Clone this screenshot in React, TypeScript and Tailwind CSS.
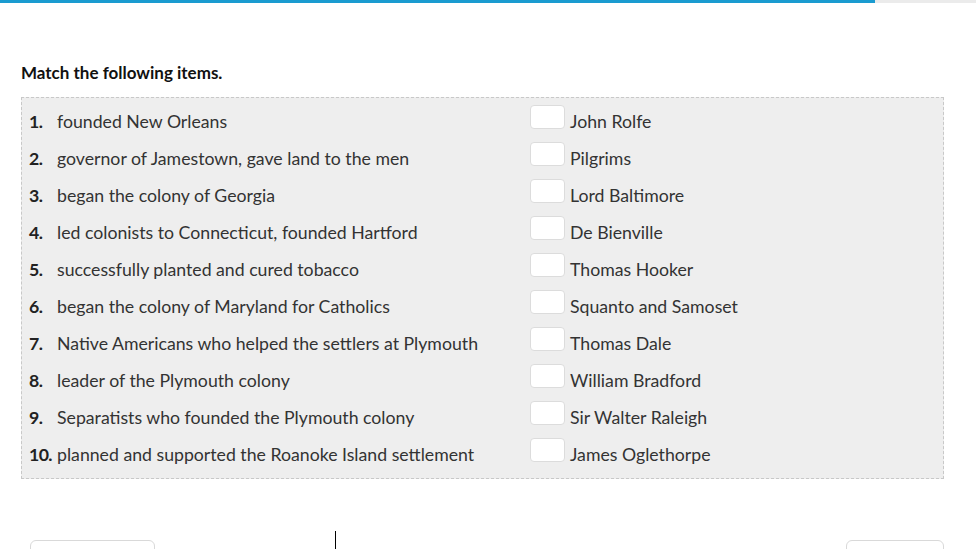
import React from "react";

const left = [
  "founded New Orleans",
  "governor of Jamestown, gave land to the men",
  "began the colony of Georgia",
  "led colonists to Connecticut, founded Hartford",
  "successfully planted and cured tobacco",
  "began the colony of Maryland for Catholics",
  "Native Americans who helped the settlers at Plymouth",
  "leader of the Plymouth colony",
  "Separatists who founded the Plymouth colony",
  "planned and supported the Roanoke Island settlement",
];

const right = [
  "John Rolfe",
  "Pilgrims",
  "Lord Baltimore",
  "De Bienville",
  "Thomas Hooker",
  "Squanto and Samoset",
  "Thomas Dale",
  "William Bradford",
  "Sir Walter Raleigh",
  "James Oglethorpe",
];

export default function App() {
  return (
    <div
      className="relative w-[976px] h-[549px] overflow-hidden bg-white text-[#333]"
      style={{ fontFamily: "Lato, 'Open Sans', sans-serif" }}
    >
      <div className="flex h-[3px] w-full">
        <div className="w-[875px] bg-[#1a9bd0]" />
        <div className="flex-1 bg-[#ebebeb]" />
      </div>
      <div className="pl-[21px] pr-[32px] pt-[60px]">
        <div className="text-[17px] font-bold text-[#111] leading-[20px]">Match the following items.</div>
        <div className="mt-[14px] h-[382px] border border-dashed border-[#c8c8c8] bg-[#eeeeee] pl-[7px] pt-[6px]">
          {left.map((t, i) => (
            <div key={i} className="flex h-[37px] items-center text-[17.7px]">
              <div className="flex w-[501px] items-center">
                <span className="w-[28px] font-bold text-[#222] tracking-[-0.6px]">{i + 1}.</span>
                <span>{t}</span>
              </div>
              <div className="mb-[12px] h-[24px] w-[35px] rounded-[4px] border border-[#dcdcdc] bg-white" />
              <span className="ml-[5px]">{right[i]}</span>
            </div>
          ))}
        </div>
      </div>
      <div className="absolute left-[30px] top-[540px] h-[30px] w-[125px] rounded-[6px] border border-[#d9d9d9] bg-white" />
      <div className="absolute left-[846px] top-[540px] h-[30px] w-[98px] rounded-[6px] border border-[#d9d9d9] bg-white" />
      <div className="absolute left-[335px] top-[531px] h-[18px] w-[1px] bg-black" />
    </div>
  );
}
